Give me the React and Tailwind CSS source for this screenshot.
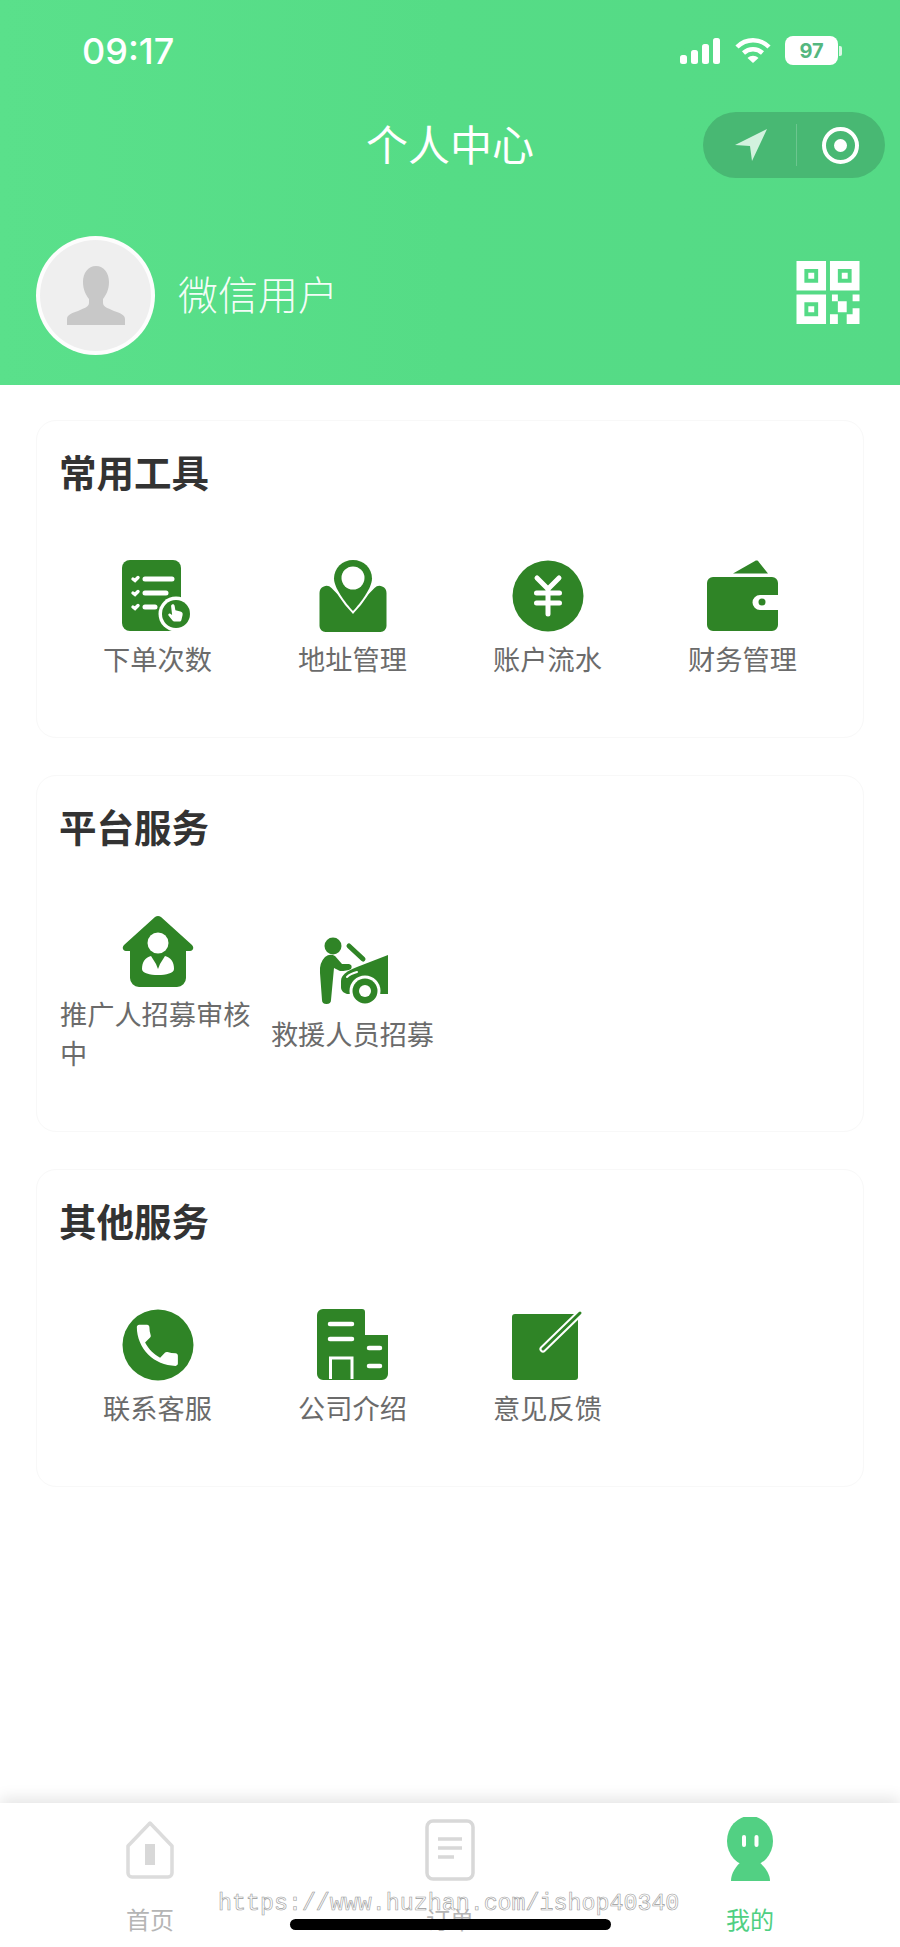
const GREEN = '#2f8426'

function OrderIcon() {
  return (
    <svg viewBox="0 0 72 72" className="w-[72px] h-[72px]">
      <rect x="0" y="0" width="59" height="71" rx="8" fill={GREEN} />
      <g stroke="#fff" strokeWidth="5" strokeLinecap="round" fill="none">
        <path d="M23 19H50M23 33H44M23 47H33" />
        <path d="M11 19l2 1.500 3-3M11 33l2 1.500 3-3M11 47l2 1.500 3-3" strokeWidth="3.400" />
      </g>
      <circle cx="54" cy="54" r="17.500" fill="#fff" />
      <circle cx="54" cy="54" r="14" fill={GREEN} />
      <path d="M50 44.500c1.200-.8 2.400 0 2.600 1.200l.8 4.600 5 1.200c1.800.5 2.600 1.600 2.200 3.400l-1.200 5c-.3 1-1 1.600-2 1.600h-5c-.8 0-1.400-.3-1.900-1l-4-5c-.8-1.100.5-2.600 1.800-1.800l1.800 1.200-1-8.600c-.1-.8.2-1.400.9-1.800z" fill="#fff" />
    </svg>
  )
}

function AddressIcon() {
  return (
    <svg viewBox="0 0 72 72" className="w-[72px] h-[72px]">
      <g transform="translate(2.500 0)">
        <path d="M0 33a7 7 0 0 1 12-5L33.500 50 55 28a7 7 0 0 1 12 5V66a6 6 0 0 1-6 6H6a6 6 0 0 1-6-6z" fill={GREEN} />
        <path d="M33.500 0C44 0 52.500 8 52.500 18.500 52.500 28 41 43 33.500 51 26 43 14.500 28 14.500 18.500 14.500 8 23 0 33.500 0Z" fill={GREEN} stroke="#fff" strokeWidth="4" paintOrder="stroke" />
        <circle cx="33.500" cy="18" r="11.500" fill="#fff" />
      </g>
    </svg>
  )
}

function YuanIcon() {
  return (
    <svg viewBox="0 0 72 72" className="w-[72px] h-[72px]">
      <circle cx="36" cy="36" r="35.500" fill={GREEN} />
      <path d="M25 18l11 11 11-11M36 29V54M24.500 33H47.500M24.500 43H47.500" stroke="#fff" strokeWidth="5" strokeLinecap="round" strokeLinejoin="round" fill="none" />
    </svg>
  )
}

function WalletIcon() {
  return (
    <svg viewBox="0 0 72 72" className="w-[72px] h-[72px]">
      <path d="M26 13.500L48 1c1.500-.8 3-.4 3.800 1L61 13.500z" fill={GREEN} />
      <path d="M6 17H65a6 6 0 0 1 6 6V35H53a7.500 7.500 0 0 0 0 15H71V65a6 6 0 0 1-6 6H6a6 6 0 0 1-6-6V23a6 6 0 0 1 6-6z" fill={GREEN} />
      <circle cx="55" cy="42" r="3.500" fill={GREEN} />
    </svg>
  )
}

function PromoterIcon() {
  return (
    <svg viewBox="0 0 72 72" className="w-[72px] h-[72px]">
      <path d="M33 2a5 5 0 0 1 6 0L70 30c2.500 2.500 1 6-2 6H64V63a9 9 0 0 1-9 9H17a9 9 0 0 1-9-9V36H4c-3 0-4.500-3.500-2-6z" fill={GREEN} />
      <circle cx="36" cy="28" r="10.500" fill="#fff" />
      <path d="M29 41l5 8 2 5 2-5 5-8c6 1.500 9 6 9 13 0 4-8 6-16 6s-16-2-16-6c0-7 3-11.500 9-13z" fill="#fff" />
    </svg>
  )
}

function RescueIcon() {
  return (
    <svg viewBox="0 0 72 72" className="w-[72px] h-[72px]">
      <circle cx="16" cy="11" r="8.500" fill={GREEN} />
      <path d="M8 22Q13 18 18 21L25 29 32 29Q36 30 34 34 30 36 23 36L17 33 14 65Q14 69 9.500 69 5 69 5 65L3 38Q2 28 8 22Z" fill={GREEN} />
      <path d="M32 11L46 24" stroke={GREEN} strokeWidth="5" strokeLinecap="round" fill="none" />
      <path d="M71 20L40 32C30 36 24 40 24 46V52C24 56 27 58 30 59L71 59Z" fill={GREEN} />
      <path d="M30 42C33 39 36 38 40 37" stroke="#fff" strokeWidth="2" strokeLinecap="round" fill="none" />
      <circle cx="48" cy="56" r="15.500" fill="#fff" />
      <circle cx="48" cy="56" r="12.500" fill={GREEN} />
      <circle cx="48" cy="56" r="6" fill="#fff" />
    </svg>
  )
}

function PhoneIcon() {
  return (
    <svg viewBox="0 0 72 72" className="w-[72px] h-[72px]">
      <circle cx="36" cy="36" r="35.500" fill={GREEN} />
      <g transform="translate(8 9) scale(2.28)">
        <path d="M6.620 10.790c1.440 2.830 3.760 5.140 6.590 6.590l2.200-2.200c.27-.27.67-.36 1.020-.24 1.120.37 2.330.57 3.570.57.550 0 1 .45 1 1V20c0 .55-.45 1-1 1-9.390 0-17-7.610-17-17 0-.55.45-1 1-1h3.500c.55 0 1 .45 1 1 0 1.250.2 2.450.57 3.570.11.350.03.740-.25 1.020l-2.200 2.200z" fill="#fff" />
      </g>
    </svg>
  )
}

function CompanyIcon() {
  return (
    <svg viewBox="0 0 72 72" className="w-[72px] h-[72px]">
      <path d="M6 0H45a3 3 0 0 1 3 3V26H71V65a6 6 0 0 1-6 6H6a6 6 0 0 1-6-6V6a6 6 0 0 1 6-6z" fill={GREEN} />
      <path d="M13 15H35M13 30H35M52 39H63M52 57H63" stroke="#fff" strokeWidth="4.500" strokeLinecap="round" />
      <path d="M13.500 70V49H35V70" stroke="#fff" strokeWidth="3" fill="none" />
    </svg>
  )
}

function FeedbackIcon() {
  return (
    <svg viewBox="0 0 72 72" className="w-[72px] h-[72px]">
      <rect x="0" y="5" width="66" height="66" rx="3" fill={GREEN} />
      <path d="M31 40L66 6" stroke="#fff" strokeWidth="7" strokeLinecap="round" />
      <path d="M31 40L68 4" stroke={GREEN} strokeWidth="3" strokeLinecap="round" />
    </svg>
  )
}

function QrCode() {
  return (
    <svg viewBox="0 0 64 64" className="w-[64px] h-[63px]" fill="#fff">
      <path fillRule="evenodd" d="M0 0H30V30H0zM8 8V22H22V8zM12 12H18V18H12z" />
      <path fillRule="evenodd" d="M34 0H64V30H34zM42 8V22H56V8zM46 12H52V18H46z" />
      <path fillRule="evenodd" d="M0 34H30V64H0zM8 42V56H22V42zM12 46H18V52H12z" />
      <path d="M36 34H42V41H36zM57 34H64V41H57zM42 41H51V52H42zM57 48H64V54H57zM34 54H42V64H34zM51 54H64V64H51z" />
    </svg>
  )
}

function StatusIcons() {
  return (
    <div className="flex items-center gap-[14px]">
      <svg viewBox="0 0 41 26" className="w-[41px] h-[26px]" fill="#fff">
        <rect x="0" y="17" width="7" height="9" rx="2.500" />
        <rect x="11" y="12" width="7" height="14" rx="2.500" />
        <rect x="22" y="6" width="7" height="20" rx="2.500" />
        <rect x="33" y="0" width="7" height="26" rx="2.500" />
      </svg>
      <svg viewBox="0 0 36 26" className="w-[36px] h-[26px]" fill="none" stroke="#fff" strokeWidth="4.500">
        <path d="M2 9C11 0 25 0 34 9" />
        <path d="M8.500 15C14 10 22 10 27.500 15" />
        <path d="M18 25L12.500 20C16 17 20 17 23.500 20Z" fill="#fff" stroke="none" />
      </svg>
      <div className="flex items-center gap-[1px]">
        <div className="w-[53px] h-[29px] rounded-[8px] bg-white flex items-center justify-center text-[20px] font-bold text-[#55b77f] font-['Inter',sans-serif]">97</div>
        <div className="w-[3px] h-[10px] rounded-r-[2px] bg-white/80" />
      </div>
    </div>
  )
}

function Capsule() {
  return (
    <div className="w-[182px] h-[66px] rounded-[33px] bg-[#48b873] flex items-center">
      <div className="flex-1 flex justify-center pl-[4px]">
        <svg viewBox="0 0 32 32" className="w-[32px] h-[32px]">
          <path d="M0 16L32 0 17 32 15 17z" fill="#d2f2de" />
        </svg>
      </div>
      <div className="w-[1px] h-[42px] bg-white/20" />
      <div className="flex-1 flex justify-center">
        <div className="w-[37px] h-[37px] rounded-full border-[4px] border-white flex items-center justify-center">
          <div className="w-[13px] h-[13px] rounded-full bg-white" />
        </div>
      </div>
    </div>
  )
}

function Header() {
  return (
    <div className="h-[385px] bg-gradient-to-r from-[#5ae08b] via-[#55dc86] to-[#55da86] text-white">
      <div className="h-[112px] pl-[82px] pr-[58px] pt-[30px] flex justify-between items-start">
        <span className="text-[36px] leading-[42px] font-medium font-['Inter',sans-serif]">09:17</span>
        <div className="pt-[6px]"><StatusIcons /></div>
      </div>
      <div className="px-[15px] grid grid-cols-[1fr_auto_1fr] items-center">
        <div />
        <h1 className="text-[42px] leading-[66px] pb-[3px] h-[66px] overflow-visible -translate-y-[2px]">个人中心</h1>
        <div className="flex justify-end"><Capsule /></div>
      </div>
      <div className="mt-[58px] pl-[36px] pr-[40px] flex items-center justify-between">
        <div className="flex items-center gap-[23px]">
          <div className="w-[119px] h-[119px] rounded-full bg-[#efefef] border-[4px] border-white/90 flex items-center justify-center">
            <svg viewBox="0 0 60 60" className="w-[60px] h-[60px]" fill="#c8c8c8">
              <path d="M30 0C38 0 43 7 43 16 43 24 40 29 37 33V37C37 41 42 42 48 45 54 47 59 49 59 53V59H1V53C1 49 6 47 12 45 18 42 23 41 23 37V33C20 29 17 24 17 16 17 7 22 0 30 0Z" />
            </svg>
          </div>
          <span className="text-[40px] leading-[56px] pb-[5px] font-light text-white/95">微信用户</span>
        </div>
        <div className="pb-[6px]"><QrCode /></div>
      </div>
    </div>
  )
}

function ToolItem({ icon, label }) {
  return (
    <div className="flex flex-col items-center">
      {icon}
      <p className="mt-[7px] mb-[1px] w-full text-[27.200px] leading-[39px] text-[#6b6b6b]">
        {label.length <= 6 ? <span className="block text-center whitespace-nowrap">{label}</span> : label}
      </p>
    </div>
  )
}

function Card({ title, items }) {
  return (
    <section className="rounded-[20px] border border-[#f8f8f8] bg-white px-[23px] pt-[22px] pb-[58px]">
      <h2 className="-ml-[1px] text-[37.500px] leading-[56px] font-semibold text-[#333] mb-[61px]">{title}</h2>
      <div className="grid grid-cols-4 items-center">
        {items.map((item) => (
          <ToolItem key={item.label} icon={item.icon} label={item.label} />
        ))}
      </div>
    </section>
  )
}

const common = [
  { label: '下单次数', icon: <OrderIcon /> },
  { label: '地址管理', icon: <AddressIcon /> },
  { label: '账户流水', icon: <YuanIcon /> },
  { label: '财务管理', icon: <WalletIcon /> },
]

const platform = [
  { label: '推广人招募审核中', icon: <PromoterIcon /> },
  { label: '救援人员招募', icon: <RescueIcon /> },
]

const other = [
  { label: '联系客服', icon: <PhoneIcon /> },
  { label: '公司介绍', icon: <CompanyIcon /> },
  { label: '意见反馈', icon: <FeedbackIcon /> },
]

function TabBar() {
  return (
    <div className="relative h-[144px] bg-white shadow-[0_-5px_14px_rgba(0,0,0,0.1)] grid grid-cols-3 pt-[14px]">
      <div className="flex flex-col items-center">
        <svg viewBox="0 0 64 64" className="w-[64px] h-[64px]" fill="none">
          <path d="M32 6L54 29V56a4 4 0 0 1-4 4H14a4 4 0 0 1-4-4V29z" stroke="#dcdcdc" strokeWidth="3.500" strokeLinejoin="round" />
          <rect x="27" y="27" width="10" height="21" fill="#d8d8d8" />
        </svg>
        <span className="mt-[23px] text-[24px] leading-[30px] text-[#b5b5b5]">首页</span>
      </div>
      <div className="flex flex-col items-center">
        <svg viewBox="0 0 64 64" className="w-[64px] h-[64px]" fill="none">
          <rect x="9" y="4" width="46" height="58" rx="6" stroke="#d8d8d8" strokeWidth="3.500" />
          <path d="M20 22H44M20 31H44M20 40H36" stroke="#d8d8d8" strokeWidth="3.500" />
        </svg>
        <span className="mt-[23px] text-[24px] leading-[30px] text-[#b5b5b5]">订单</span>
      </div>
      <div className="flex flex-col items-center">
        <svg viewBox="0 0 64 64" className="w-[64px] h-[64px]">
          <ellipse cx="32" cy="24" rx="23" ry="25" fill="#52d083" />
          <path d="M24 44C18 49 13 56 13 64H52C52 56 46 49 40 44Z" fill="#52d083" />
          <rect x="24" y="18" width="4" height="12" rx="2" fill="#fff" />
          <rect x="36.500" y="18" width="4" height="12" rx="2" fill="#fff" />
        </svg>
        <span className="mt-[23px] text-[24px] leading-[30px] text-[#4fcf82]">我的</span>
      </div>
      <div className="absolute left-[218px] top-[86px] text-[23.300px] leading-[30px] whitespace-nowrap text-white/50 [-webkit-text-stroke:0.6px_#9a9a9a] font-['Liberation_Mono',monospace]">https://www.huzhan.com/ishop40340</div>
      <div className="absolute left-[290px] top-[116px] w-[321px] h-[11px] rounded-full bg-black" />
    </div>
  )
}

export default function App() {
  return (
    <div className="w-[900px] h-[1947px] flex flex-col bg-white font-['Noto_Sans_CJK_SC','Noto_Sans',sans-serif]">
      <Header />
      <main className="flex-1 px-[36px] pt-[35px] flex flex-col gap-[37px]">
        <Card title="常用工具" items={common} />
        <Card title="平台服务" items={platform} />
        <Card title="其他服务" items={other} />
      </main>
      <TabBar />
    </div>
  )
}
